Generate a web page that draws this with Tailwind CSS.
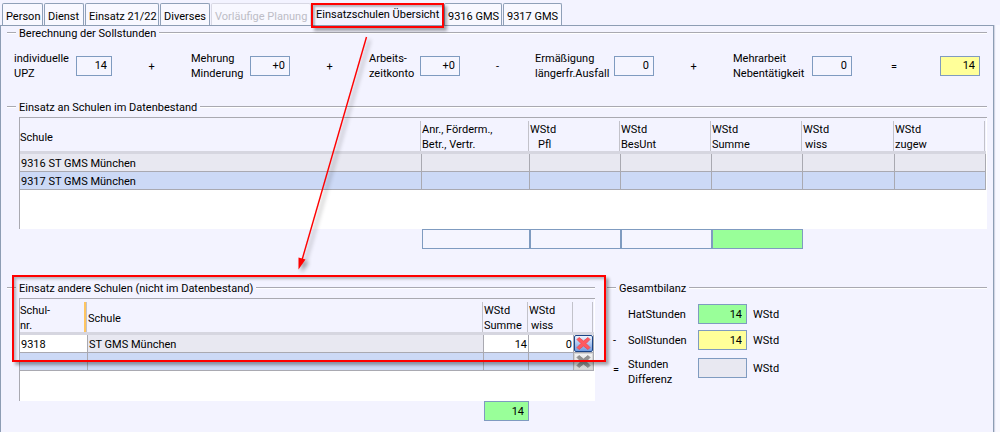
<!DOCTYPE html>
<html lang="de">
<head>
<meta charset="utf-8">
<meta name="viewport" content="width=device-width, initial-scale=1">
<title>Einsatzschulen Übersicht</title>
<script src="https://cdn.jsdelivr.net/npm/@tailwindcss/browser@4"></script>
</head>
<body class="relative flex min-h-screen flex-col bg-[#f3f3ff] pt-[3px] font-['Roboto','Open_Sans',sans-serif] text-[11px] leading-[15px] text-black">

<!-- Tabs -->
<nav role="tablist" class="flex h-[22px] gap-px pl-[2px] whitespace-nowrap">
  <button role="tab" class="w-[41px] rounded-t-xs border border-b-0 border-[#8fa0b8] bg-[#f8f8ff] pt-[3px] pl-[3px] text-left">Person</button>
  <button role="tab" class="w-10 rounded-t-xs border border-b-0 border-[#8fa0b8] bg-[#f8f8ff] pt-[3px] pl-[3px] text-left">Dienst</button>
  <button role="tab" class="w-[74px] rounded-t-xs border border-b-0 border-[#8fa0b8] bg-[#f8f8ff] pt-[3px] pl-[3px] text-left">Einsatz 21/22</button>
  <button role="tab" class="w-[50px] rounded-t-xs border border-b-0 border-[#8fa0b8] bg-[#f8f8ff] pt-[3px] pl-[3px] text-left">Diverses</button>
  <button role="tab" disabled class="w-[100px] rounded-t-xs border border-b-0 border-[#d8d8e4] bg-[#f8f8ff] pt-[3px] pl-[3px] text-left text-[#bdbdc6]">Vorläufige Planung</button>
  <button role="tab" aria-selected="true" class="w-[131px] bg-[#f3f3ff] pl-1 text-left">Einsatzschulen Übersicht</button>
  <button role="tab" class="w-[58px] rounded-t-xs border border-b-0 border-[#8fa0b8] bg-[#f8f8ff] pt-[3px] pl-[3px] text-left">9316 GMS</button>
  <button role="tab" class="w-[59px] rounded-t-xs border border-b-0 border-[#8fa0b8] bg-[#f8f8ff] pt-[3px] pl-[3px] text-left">9317 GMS</button>
</nav>

<div class="flex grow border-r-4 border-[#f9f9ff]">
<main class="mr-[2px] grow border-t border-r border-l border-[#8d9db4] px-[6px] pt-px shadow-[1px_0_0_#d2d6e2]">

  <!-- Sollstunden -->
  <section>
    <div class="flex h-3 items-center gap-[3px]">
      <span class="h-[2px] w-[9px] border-t border-[#a9a9b1] bg-white"></span>
      <h2>Berechnung der Sollstunden</h2>
      <span class="h-[2px] grow border-t border-[#a9a9b1] bg-white"></span>
    </div>
    <div class="mt-[11px] grid h-[30px] grid-cols-[62px_36px_minmax(0,79fr)_59px_40px_minmax(0,79fr)_51px_40px_minmax(0,75fr)_79px_40px_minmax(0,79fr)_79px_40px_minmax(0,88fr)_40px] items-center pr-[7px] pl-[7px] whitespace-nowrap">
      <label for="upz" class="pt-px">individuelle<br>UPZ</label>
      <input id="upz" readonly value="14" class="h-5 w-full border border-[#7f9bc0] bg-[#f5f5ff] pr-1 text-right">
      <span class="pt-[2px] text-center">+</span>
      <label for="mehrung" class="pt-px">Mehrung<br>Minderung</label>
      <input id="mehrung" readonly value="+0" class="h-5 w-full border border-[#7f9bc0] bg-[#f5f5ff] pr-1 text-right">
      <span class="pt-[2px] text-center">+</span>
      <label for="konto" class="pt-px">Arbeits-<br>zeitkonto</label>
      <input id="konto" readonly value="+0" class="h-5 w-full border border-[#7f9bc0] bg-[#f5f5ff] pr-1 text-right">
      <span class="pt-[2px] text-center">-</span>
      <label for="erm" class="pt-px">Ermäßigung<br>längerfr.Ausfall</label>
      <input id="erm" readonly value="0" class="h-5 w-full border border-[#7f9bc0] bg-[#f5f5ff] pr-1 text-right">
      <span class="pt-[2px] text-center">+</span>
      <label for="mehrarbeit" class="pt-px">Mehrarbeit<br>Nebentätigkeit</label>
      <input id="mehrarbeit" readonly value="0" class="h-5 w-full border border-[#7f9bc0] bg-[#f5f5ff] pr-1 text-right">
      <span class="pt-[2px] pr-1 text-center">=</span>
      <input aria-label="Sollstunden gesamt" readonly value="14" class="h-5 w-full border border-[#7f9bc0] bg-[#ffff99] pr-1 text-right">
    </div>
  </section>

  <!-- Schulen im Datenbestand -->
  <section class="mt-[21px]">
    <div class="flex h-3 items-center gap-[3px]">
      <span class="h-[2px] w-[9px] border-t border-[#a9a9b1] bg-white"></span>
      <h2>Einsatz an Schulen im Datenbestand</h2>
      <span class="h-[2px] grow border-t border-[#a9a9b1] bg-white"></span>
    </div>
    <div class="mt-1 ml-3 h-28 border-t border-l border-[#a9a9b1] bg-white pr-px">
      <table class="w-full table-fixed border-separate border-spacing-0 text-left whitespace-nowrap">
        <colgroup><col><col class="w-[108px]"><col class="w-[91px]"><col class="w-[91px]"><col class="w-[91px]"><col class="w-[92px]"><col class="w-[91px]"></colgroup>
        <thead class="bg-[#f3f3ff]">
          <tr>
            <th class="border-b-3 border-[#d6d6e0] p-0 pt-[3px] pr-px font-normal"><div class="flex h-[30px] items-center border-r border-[#c2c2ca] pt-[2px]">Schule</div></th>
            <th class="border-b-3 border-[#d6d6e0] p-0 pt-[3px] pr-px font-normal"><div class="h-[30px] border-r border-[#c2c2ca] pt-px">Anr., Förderm.,<br>Betr., Vertr.</div></th>
            <th class="border-b-3 border-[#d6d6e0] p-0 pt-[3px] pr-px font-normal"><div class="h-[30px] border-r border-[#c2c2ca] pt-px">WStd<br><span class="pl-2">Pfl</span></div></th>
            <th class="border-b-3 border-[#d6d6e0] p-0 pt-[3px] pr-px font-normal"><div class="h-[30px] border-r border-[#c2c2ca] pt-px">WStd<br>BesUnt</div></th>
            <th class="border-b-3 border-[#d6d6e0] p-0 pt-[3px] pr-px font-normal"><div class="h-[30px] border-r border-[#c2c2ca] pt-px">WStd<br>Summe</div></th>
            <th class="border-b-3 border-[#d6d6e0] p-0 pt-[3px] pr-px font-normal"><div class="h-[30px] border-r border-[#c2c2ca] pt-px">WStd<br><span class="pl-[2px]">wiss</span></div></th>
            <th class="border-b-3 border-[#d6d6e0] p-0 pt-[3px] pr-px font-normal"><div class="h-[30px] border-r border-[#c2c2ca] pt-px">WStd<br>zugew</div></th>
          </tr>
        </thead>
        <tbody class="[&_td]:h-[18px] [&_td]:border-r [&_td]:border-b [&_td]:border-[#a9a9b1] [&_td]:p-0 [&_td]:pt-[2px] [&_td]:pl-px">
          <tr class="bg-[#e8e8f1]"><td>9316 ST GMS München</td><td></td><td></td><td></td><td></td><td></td><td></td></tr>
          <tr class="bg-[#ccd9f6]"><td>9317 ST GMS München</td><td></td><td></td><td></td><td></td><td></td><td></td></tr>
        </tbody>
      </table>
    </div>
    <div class="flex justify-end pr-[184px]">
      <input aria-label="Summe Anrechnungen" readonly class="h-5 w-[108px] border border-[#7f9bc0] bg-[#f5f5ff]">
      <input aria-label="Summe Pflicht" readonly class="h-5 w-[91px] border border-[#7f9bc0] bg-[#f5f5ff]">
      <input aria-label="Summe BesUnt" readonly class="h-5 w-[91px] border border-[#7f9bc0] bg-[#f5f5ff]">
      <input aria-label="Gesamtsumme" readonly class="h-5 w-[91px] border border-[#7f9bc0] bg-[#99ff99]">
    </div>
  </section>

  <div class="mt-[33px] grid grid-cols-[minmax(0,588fr)_minmax(0,380fr)] gap-3">

    <!-- Andere Schulen -->
    <section>
      <div class="flex h-3 items-center gap-[3px]">
        <span class="h-[2px] w-[9px] border-t border-[#a9a9b1] bg-white"></span>
        <h2>Einsatz andere Schulen (nicht im Datenbestand)</h2>
        <span class="h-[2px] grow border-t border-[#a9a9b1] bg-white"></span>
      </div>
      <div class="mt-1 ml-3 h-[103px] border-t border-l border-[#a9a9b1] bg-white pr-px">
        <table class="w-full table-fixed border-separate border-spacing-0 text-left whitespace-nowrap">
          <colgroup><col class="w-[68px]"><col><col class="w-[45px]"><col class="w-[45px]"><col class="w-5"></colgroup>
          <thead class="bg-[#f3f3ff]">
            <tr>
              <th class="border-b-3 border-[#d6d6e0] p-0 pt-[3px] pr-px font-normal"><div class="border-r border-[#c2c2ca]"><div class="h-[30px] border-r-2 border-[#ffc560] pt-px">Schul-<br>nr.</div></div></th>
              <th class="border-b-3 border-[#d6d6e0] p-0 pt-[3px] pr-px font-normal"><div class="flex h-[30px] items-center border-r border-[#c2c2ca] pt-[2px]">Schule</div></th>
              <th class="border-b-3 border-[#d6d6e0] p-0 pt-[3px] pr-px font-normal"><div class="h-[30px] border-r border-[#c2c2ca] pt-px">WStd<br>Summe</div></th>
              <th class="border-b-3 border-[#d6d6e0] p-0 pt-[3px] pr-px font-normal"><div class="h-[30px] border-r border-[#c2c2ca] pt-px">WStd<br><span class="pl-[2px]">wiss</span></div></th>
              <th aria-label="Löschen" class="border-b-3 border-[#d6d6e0] p-0 pt-[3px] pr-px font-normal"><div class="h-[30px] border-r border-[#c2c2ca]"></div></th>
            </tr>
          </thead>
          <tbody class="[&_td]:h-[18px] [&_td]:border-r [&_td]:border-b [&_td]:border-[#a9a9b1] [&_td]:p-0 [&_td]:px-px [&_td]:pt-[2px]">
            <tr>
              <td>9318</td><td class="bg-[#e8e8f1]">ST GMS München</td><td class="text-right">14</td><td class="text-right">0</td>
              <td class="!p-0"><button aria-label="Zeile löschen" class="block h-[17px] w-full rounded-xs border border-[#1c4587] bg-linear-to-b from-[#eef4ff] to-[#6f9be0]"><svg viewBox="0 0 17 15" class="block h-[15px] w-full"><path d="M4 1.500 L8.500 5 L13 1.500 L15 3.500 L11 7.500 L15 11.500 L13 13.500 L8.500 10 L4 13.500 L2 11.500 L6 7.500 L2 3.500 Z" fill="#ff5a5f" stroke="#e8474e" stroke-width=".8"/></svg></button></td>
            </tr>
            <tr class="bg-[#ccd9f6]">
              <td></td><td></td><td></td><td></td>
              <td class="!p-0"><button aria-label="Leere Zeile löschen" disabled class="block h-[17px] w-full border border-[#d4d4d4] bg-linear-to-b from-[#f2f2f2] to-[#d8d8d8]"><svg viewBox="0 0 17 15" class="block h-[15px] w-full"><path d="M4 1.500 L8.500 5 L13 1.500 L15 3.500 L11 7.500 L15 11.500 L13 13.500 L8.500 10 L4 13.500 L2 11.500 L6 7.500 L2 3.500 Z" fill="#929292" stroke="#848484" stroke-width=".8"/></svg></button></td>
            </tr>
          </tbody>
        </table>
      </div>
      <div class="flex justify-end pr-[66px]">
        <input aria-label="Summe WStd" readonly value="14" class="h-5 w-[45px] border border-[#7f9bc0] bg-[#99ff99] pr-1 text-right">
      </div>
    </section>

    <!-- Gesamtbilanz -->
    <section>
      <div class="flex h-3 items-center gap-[3px]">
        <span class="h-[2px] w-[9px] border-t border-[#a9a9b1] bg-white"></span>
        <h2>Gesamtbilanz</h2>
        <span class="h-[2px] grow border-t border-[#a9a9b1] bg-white"></span>
      </div>
      <div class="mt-[10px] flex flex-col gap-[6px] pl-[6px]">
        <div class="flex items-center">
          <span class="w-[15px]"></span>
          <label for="hat" class="w-[70px]">HatStunden</label>
          <input id="hat" readonly value="14" class="h-5 w-[49px] border border-[#7f9bc0] bg-[#99ff99] pr-1 text-right">
          <span class="pl-[6px]">WStd</span>
        </div>
        <div class="flex items-center">
          <span class="w-[15px]">-</span>
          <label for="soll" class="w-[70px]">SollStunden</label>
          <input id="soll" readonly value="14" class="h-5 w-[49px] border border-[#7f9bc0] bg-[#ffff99] pr-1 text-right">
          <span class="pl-[6px]">WStd</span>
        </div>
        <div class="flex items-start">
          <span class="w-[15px] pt-[6px]">=</span>
          <label for="diff" class="w-[70px] pt-px">Stunden<br>Differenz</label>
          <input id="diff" readonly class="mt-[2px] h-5 w-[49px] border border-[#7f9bc0] bg-[#e8e8f1]">
          <span class="pt-[5px] pl-[6px]">WStd</span>
        </div>
      </div>
    </section>
  </div>
</main>
</div>

<!-- Markierungen über der Maske -->
<div class="pointer-events-none absolute top-[3px] left-[311px] h-[25px] w-[133px] border-2 border-[#ff0000] shadow-[3px_3px_3px_#00000055,inset_2px_2px_2px_#00000040]"></div>
<div class="pointer-events-none absolute top-[275px] left-3 h-[87px] w-[594px] border-2 border-[#ff0000] shadow-[3px_3px_3px_#00000055,inset_2px_2px_3px_#00000044]"></div>
<svg class="pointer-events-none absolute top-[30px] left-[280px] h-[245px] w-[100px] drop-shadow-[3px_3px_2px_#00000066]" viewBox="0 0 100 245" aria-hidden="true">
  <path d="M86.500 7 L22 230" stroke="#ff0000" stroke-width="1.400" fill="none"/>
  <path d="M18.500 239.500 L18.500 227.500 L25.500 229.500 Z" fill="#ff0000"/>
</svg>
</body>
</html>
